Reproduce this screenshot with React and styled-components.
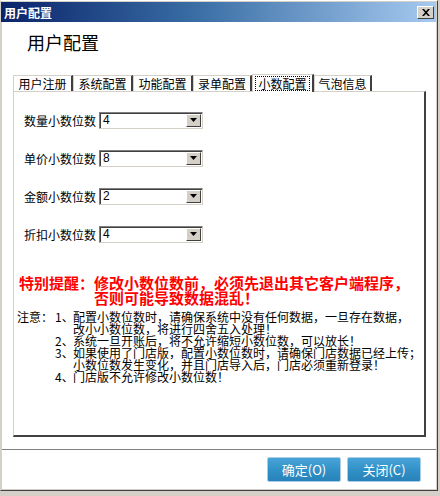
import React from 'react';
import styled, { createGlobalStyle } from 'styled-components';

const GlobalStyle = createGlobalStyle`
  html, body {
    margin: 0;
    padding: 0;
    background: #d4d0c8;
  }
  body {
    font-family: "SimSun", "Noto Sans CJK SC", "Liberation Sans", sans-serif;
    font-size: 12px;
    color: #000;
  }
`;

const cjk = `"SimSun", "Noto Sans CJK SC", "Liberation Sans", sans-serif`;

// --- Window frame ---
const Window = styled.div`
  box-sizing: border-box;
  width: 438px;
  height: 491px;
  display: flex;
  flex-direction: column;
  border-top: 1px solid #fff;
  border-left: 1px solid #d4d0c8;
  border-right: 1px solid #404040;
  border-bottom: 1px solid #404040;
  background: #d4d0c8;
  padding: 1px 1px 1px 0;
`;

const TitleBar = styled.div`
  height: 20px;
  flex: none;
  display: flex;
  align-items: center;
  justify-content: space-between;
  padding: 0 2px 0 3px;
  background: linear-gradient(to right, #0a246a 0%, #3a6ea5 45%, #a6caf0 100%);
`;

const TitleText = styled.span`
  color: #fff;
  font-weight: bold;
  font-size: 12px;
  font-family: ${cjk};
`;

const CloseButton = styled.div`
  box-sizing: border-box;
  width: 17px;
  height: 13px;
  background: #d4d0c8;
  border-top: 1px solid #fff;
  border-left: 1px solid #fff;
  border-right: 1px solid #404040;
  border-bottom: 1px solid #404040;
  display: flex;
  align-items: center;
  justify-content: center;
`;

const Body = styled.div`
  flex: 1;
  background: #fff;
  display: flex;
  flex-direction: column;
  border-left: 1px solid #d4d0c8;
`;

const Heading = styled.div`
  font-size: 18px;
  line-height: 22px;
  padding: 9px 0 0 25px;
  height: 22px;
  font-family: ${cjk};
`;

// --- Tabs ---
const TabRow = styled.div`
  display: flex;
  align-items: flex-end;
  margin: 20px 0 0 11px;
  height: 18px;
`;

const Tab = styled.div`
  box-sizing: border-box;
  width: ${p => p.$w}px;
  height: ${p => (p.$active ? 18 : 16)}px;
  border-top: 1px solid #d4d0c8;
  border-left: 1px solid #d4d0c8;
  border-right: 2px solid #404040;
  background: #fff;
  display: flex;
  align-items: center;
  justify-content: center;
  font-size: 12px;
  font-family: ${cjk};
  position: relative;
  z-index: ${p => (p.$active ? 2 : 1)};
  margin-bottom: ${p => (p.$active ? -1 : 0)}px;
`;

const TabLabel = styled.span`
  line-height: 13px;
  padding: 0 2px;
  outline: ${p => (p.$focus ? '1px dotted #000' : 'none')};
`;

const Panel = styled.div`
  box-sizing: border-box;
  margin: 0 10px 0 11px;
  height: 346px;
  border-top: 1px solid #d4d0c8;
  border-left: 1px solid #d4d0c8;
  border-right: 2px solid #404040;
  border-bottom: 2px solid #404040;
  padding: 20px 0 0 0;
  display: flex;
  flex-direction: column;
`;

// --- Form ---
const Form = styled.div`
  display: flex;
  flex-direction: column;
  gap: 22px;
  padding-left: 10px;
`;

const FieldRow = styled.div`
  display: flex;
  align-items: center;
  height: 16px;
`;

const FieldLabel = styled.span`
  width: 75px;
  font-size: 12px;
  font-family: ${cjk};
`;

const Select = styled.div`
  box-sizing: border-box;
  width: 104px;
  height: 17px;
  border-top: 1px solid #808080;
  border-left: 1px solid #808080;
  border-right: 1px solid #d4d0c8;
  border-bottom: 1px solid #d4d0c8;
  box-shadow: inset 1px 1px 0 #404040;
  display: flex;
  align-items: center;
  justify-content: space-between;
  padding: 1px 1px 1px 3px;
  background: #fff;
  font-family: "Liberation Sans", sans-serif;
  font-size: 12px;
`;

const DropButton = styled.div`
  box-sizing: border-box;
  width: 15px;
  height: 13px;
  background: #d4d0c8;
  border-top: 1px solid #fff;
  border-left: 1px solid #fff;
  border-right: 1px solid #404040;
  border-bottom: 1px solid #404040;
  display: flex;
  align-items: center;
  justify-content: center;
`;

// --- Warning + notes ---
const Warning = styled.div`
  display: grid;
  grid-template-columns: 75px auto;
  margin: 33px 0 0 5px;
  color: #ff0000;
  font-weight: bold;
  font-size: 15px;
  line-height: 15px;
  font-family: ${cjk};
`;

const Notes = styled.div`
  display: grid;
  grid-template-columns: 38px 18px auto;
  margin: 6px 0 0 3px;
  font-size: 12px;
  line-height: 12px;
  font-family: ${cjk};
`;

const NoteHead = styled.span`
  grid-column: 1;
  grid-row: 1;
`;

const NoteNum = styled.span`
  grid-column: 2;
  text-align: right;
`;

const NoteText = styled.span`
  grid-column: 3;
`;

// --- Footer ---
const Footer = styled.div`
  margin-top: 12px;
  border-top: 1px solid #808080;
  flex: 1;
  display: flex;
  justify-content: flex-end;
  align-items: flex-start;
  gap: 6px;
  padding: 7px 15px 0 0;
`;

const Button = styled.div`
  box-sizing: border-box;
  width: 74px;
  height: 25px;
  border-radius: 2px;
  border: 1px solid #a9cde4;
  background: linear-gradient(to bottom, #48a4d8 0%, #3292c8 50%, #2782b9 100%);
  color: #fff;
  font-size: 13px;
  font-family: ${cjk};
  display: flex;
  align-items: center;
  justify-content: center;
`;

const tabs = [
  { label: '用户注册', w: 60 },
  { label: '系统配置', w: 60 },
  { label: '功能配置', w: 60 },
  { label: '录单配置', w: 59 },
  { label: '小数配置', w: 62, active: true },
  { label: '气泡信息', w: 58 },
];

const fields = [
  { label: '数量小数位数', value: '4' },
  { label: '单价小数位数', value: '8' },
  { label: '金额小数位数', value: '2' },
  { label: '折扣小数位数', value: '4' },
];

const notes = [
  { num: '1、', lines: ['配置小数位数时，请确保系统中没有任何数据，一旦存在数据，', '改小小数位数，将进行四舍五入处理！'] },
  { num: '2、', lines: ['系统一旦开账后，将不允许缩短小数位数，可以放长！'] },
  { num: '3、', lines: ['如果使用了门店版，配置小数位数时，请确保门店数据已经上传；', '小数位数发生变化，并且门店导入后，门店必须重新登录！'] },
  { num: '4、', lines: ['门店版不允许修改小数位数！'] },
];

const Arrow = () => (
  <svg width="7" height="4" viewBox="0 0 7 4">
    <path d="M0 0h7L3.5 4z" fill="#000" />
  </svg>
);

const CloseIcon = () => (
  <svg width="8" height="7" viewBox="0 0 8 7">
    <path d="M0 0h2l2 2.3L6 0h2L5 3.5 8 7H6L4 4.7 2 7H0l3-3.5z" fill="#000" />
  </svg>
);

const App = () => (
  <>
    <GlobalStyle />
    <Window>
      <TitleBar>
        <TitleText>用户配置</TitleText>
        <CloseButton><CloseIcon /></CloseButton>
      </TitleBar>
      <Body>
        <Heading>用户配置</Heading>
        <TabRow>
          {tabs.map(t => (
            <Tab key={t.label} $w={t.w} $active={t.active}>
              <TabLabel $focus={t.active}>{t.label}</TabLabel>
            </Tab>
          ))}
        </TabRow>
        <Panel>
          <Form>
            {fields.map(f => (
              <FieldRow key={f.label}>
                <FieldLabel>{f.label}</FieldLabel>
                <Select>
                  <span>{f.value}</span>
                  <DropButton><Arrow /></DropButton>
                </Select>
              </FieldRow>
            ))}
          </Form>
          <Warning>
            <span>特别提醒：</span>
            <span>修改小数位数前，必须先退出其它客户端程序，<br />否则可能导致数据混乱！</span>
          </Warning>
          <Notes>
            <NoteHead>注意：</NoteHead>
            {notes.map(n => (
              <React.Fragment key={n.num}>
                <NoteNum>{n.num}</NoteNum>
                <NoteText>{n.lines.map((l, i) => (<React.Fragment key={i}>{i > 0 && <br />}{l}</React.Fragment>))}</NoteText>
              </React.Fragment>
            ))}
          </Notes>
        </Panel>
        <Footer>
          <Button>确定(O)</Button>
          <Button>关闭(C)</Button>
        </Footer>
      </Body>
    </Window>
  </>
);

export default App;
